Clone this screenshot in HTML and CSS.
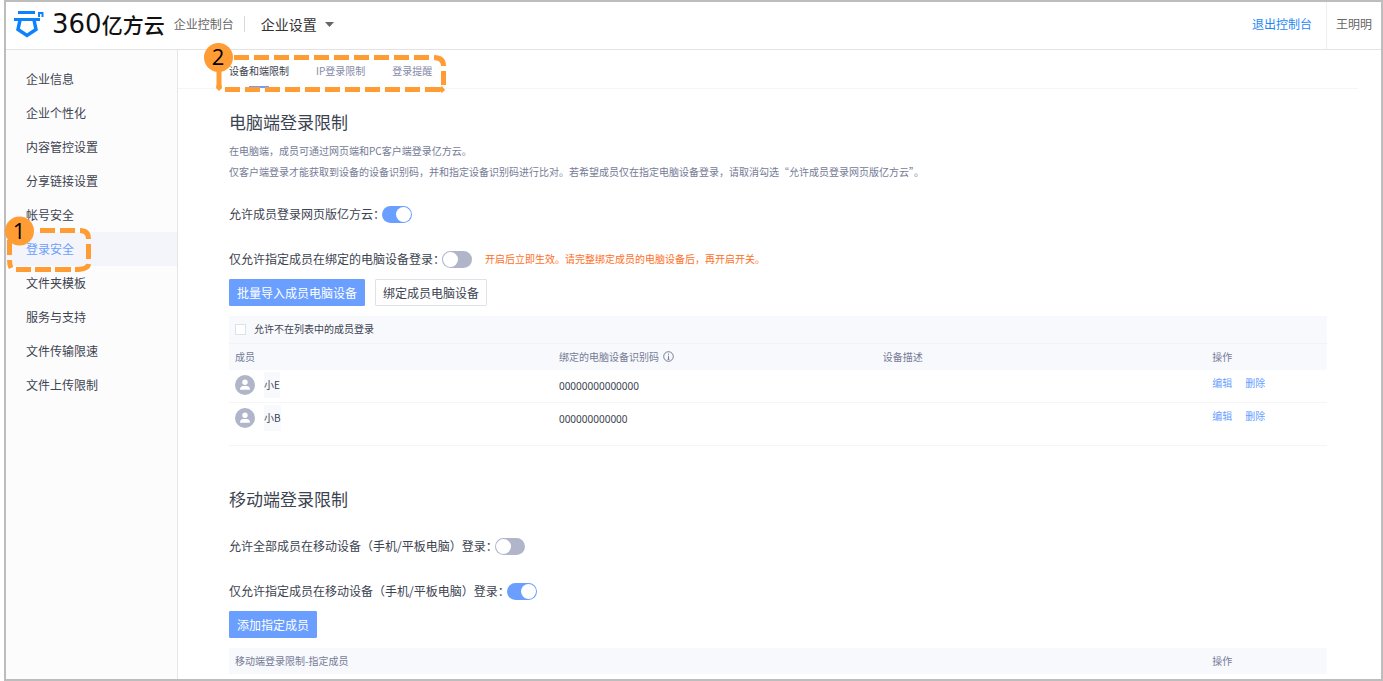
FILE: index.html
```html
<!DOCTYPE html>
<html lang="zh-CN">
<head>
<meta charset="utf-8">
<title>企业控制台</title>
<link rel="stylesheet" href="styles.css">
</head>
<body>
<div class="frame">
  <header class="header">
    <svg class="logo" width="32" height="28" viewBox="0 0 32 28" fill="none" stroke="#0c83fb" aria-hidden="true">
      <path d="M4 2.500H21" stroke-width="3"/>
      <path d="M0 9.500H26" stroke-width="3"/>
      <path d="M25 7V3H28.500V7" stroke-width="2"/>
      <path d="M6 10L4 19.500L13 25.500L22 19.500L20 10" stroke-width="3.500"/>
    </svg>
    <span class="brand"><span class="brand-num">360</span>亿方云</span>
    <span class="console">企业控制台</span>
    <button class="switcher" type="button">企业设置
      <svg width="9" height="5" viewBox="0 0 9 5" aria-hidden="true"><path d="M0 0H9L4.500 5Z" fill="#666"/></svg>
    </button>
    <a class="exit" href="#">退出控制台</a>
    <span class="user">王明明</span>
  </header>

  <div class="body">
    <nav class="sidebar">
      <a href="#">企业信息</a>
      <a href="#">企业个性化</a>
      <a href="#">内容管控设置</a>
      <a href="#">分享链接设置</a>
      <a href="#">帐号安全</a>
      <a class="current" href="#">登录安全
        <svg class="mark mark-side" width="90" height="60" viewBox="4 214 90 60" fill="none" stroke="#ff9c33" stroke-width="5">
          <path d="M40 230.500H55M60 230.500H75M80 230.500Q88.500 230.500 88.500 239M88.500 244V259M88.500 264Q88 269.500 75 269.500M71 269.500H55M51 269.500H35M31 269.500H16M11 268Q9.500 265 9.500 260M9.500 255V240"/>
          <circle cx="19.500" cy="231" r="14.500" fill="#ff9c33" stroke="none"/>
          <text class="mark-num" x="19" y="239">1</text>
        </svg>
      </a>
      <a href="#">文件夹模板</a>
      <a href="#">服务与支持</a>
      <a href="#">文件传输限速</a>
      <a href="#">文件上传限制</a>
    </nav>

    <main class="main">
      <nav class="tabs">
        <a class="on" href="#">设备和端限制</a>
        <a href="#">IP登录限制</a>
        <a href="#">登录提醒</a>
        <svg class="mark mark-tabs" width="243" height="60" viewBox="204 33 243 60" fill="none" stroke="#ff9c33" stroke-width="5">
          <path d="M234 57.500H430" stroke-dasharray="15 5"/>
          <path d="M434 57.500Q443.500 57.500 443.500 66M443.500 71V85M443.500 88L440 91"/>
          <path d="M225 89.500H440" stroke-dasharray="15 5"/>
          <path d="M219 70V86"/>
          <path d="M216.500 85H221.500L222 88L219 91L216 88Z" fill="#ff9c33" stroke="none"/>
          <circle cx="218.500" cy="57.500" r="14.500" fill="#ff9c33" stroke="none"/>
          <text class="mark-num" x="218" y="65">2</text>
        </svg>
      </nav>

      <div class="content">
        <section class="section">
          <h2>电脑端登录限制</h2>
          <p>在电脑端，成员可通过网页端和PC客户端登录亿方云。</p>
          <p>仅客户端登录才能获取到设备的设备识别码，并和指定设备识别码进行比对。若希望成员仅在指定电脑设备登录，请取消勾选“允许成员登录网页版亿方云”。</p>
          <div class="option">
            <label for="web">允许成员登录网页版亿方云：</label>
            <input class="toggle" id="web" type="checkbox" checked>
          </div>
          <div class="option">
            <label for="bound">仅允许指定成员在绑定的电脑设备登录：</label>
            <input class="toggle" id="bound" type="checkbox">
            <span class="warn">开启后立即生效。请完整绑定成员的电脑设备后，再开启开关。</span>
          </div>
          <div class="actions">
            <button class="btn primary" type="button">批量导入成员电脑设备</button>
            <button class="btn" type="button">绑定成员电脑设备</button>
          </div>
          <table class="table">
            <colgroup><col class="c-member"><col class="c-code"><col class="c-desc"><col class="c-ops"></colgroup>
            <thead>
              <tr class="allow"><td colspan="4"><label class="check"><input type="checkbox">允许不在列表中的成员登录</label></td></tr>
              <tr>
                <th>成员</th>
                <th><span class="with-icon">绑定的电脑设备识别码
                  <svg width="11" height="11" viewBox="0 0 11 11" fill="none" stroke="#757b96" aria-hidden="true"><circle cx="5.500" cy="5.500" r="4.800"/><path d="M5.500 4.800V8.300M5.500 2.600V3.800M4.500 8.300H6.500"/></svg></span></th>
                <th>设备描述</th>
                <th>操作</th>
              </tr>
            </thead>
            <tbody>
              <tr>
                <td><span class="member">
                  <svg width="20" height="20" viewBox="0 0 20 20" aria-hidden="true"><circle cx="10" cy="10" r="10" fill="#b1b5ca"/><circle cx="10" cy="7.300" r="2.700" fill="#fff"/><path d="M5 14.800V13.500Q5.500 11 8 11H12Q14.500 11 15 13.500V14.800Z" fill="#fff"/></svg>
                  <span class="name">小E</span></span></td>
                <td class="code">00000000000000</td>
                <td></td>
                <td class="ops"><a href="#">编辑</a><a href="#">删除</a></td>
              </tr>
              <tr class="last">
                <td><span class="member">
                  <svg width="20" height="20" viewBox="0 0 20 20" aria-hidden="true"><circle cx="10" cy="10" r="10" fill="#b1b5ca"/><circle cx="10" cy="7.300" r="2.700" fill="#fff"/><path d="M5 14.800V13.500Q5.500 11 8 11H12Q14.500 11 15 13.500V14.800Z" fill="#fff"/></svg>
                  <span class="name">小B</span></span></td>
                <td class="code">000000000000</td>
                <td></td>
                <td class="ops"><a href="#">编辑</a><a href="#">删除</a></td>
              </tr>
            </tbody>
          </table>
        </section>

        <section class="section">
          <h2>移动端登录限制</h2>
          <div class="option">
            <label for="all-mobile">允许全部成员在移动设备（手机/平板电脑）登录：</label>
            <input class="toggle" id="all-mobile" type="checkbox">
          </div>
          <div class="option">
            <label for="some-mobile">仅允许指定成员在移动设备（手机/平板电脑）登录：</label>
            <input class="toggle" id="some-mobile" type="checkbox" checked>
          </div>
          <div class="actions">
            <button class="btn primary" type="button">添加指定成员</button>
          </div>
          <table class="table">
            <colgroup><col class="c-wide"><col class="c-ops"></colgroup>
            <thead><tr><th>移动端登录限制-指定成员</th><th>操作</th></tr></thead>
          </table>
        </section>
      </div>
    </main>
  </div>
</div>
</body>
</html>
```
FILE: styles.css
```css
* {
  box-sizing: border-box;
}

body {
  margin: 0;
  background: #fff;
  color: #3c4350;
  font-family: "Noto Sans CJK SC", sans-serif;
  font-size: 12px;
  line-height: 20px;
}

a {
  color: inherit;
  text-decoration: none;
}

button,
input {
  margin: 0;
  font: inherit;
  color: inherit;
}

.frame {
  display: flex;
  flex-direction: column;
  min-height: 100vh;
  margin-left: 4px;
  border: 2px solid #bdbdbd;
}

.header {
  display: flex;
  align-items: center;
  height: 48px;
  padding-left: 8px;
  border-bottom: 1px solid #e3e3e3;
}

.logo,
.brand,
.console,
.switcher,
.exit {
  margin-bottom: 3px;
}

.logo {
  margin-right: 6px;
}

.brand {
  display: flex;
  align-items: center;
  color: #111;
  font-size: 21px;
  font-weight: 500;
}

.brand-num {
  font-family: "DejaVu Sans", sans-serif;
  font-size: 26px;
  font-weight: 400;
}

.console {
  margin-left: 9px;
  padding-right: 10px;
  border-right: 1px solid #d8d8d8;
  color: #666;
  line-height: 16px;
}

.switcher {
  display: flex;
  align-items: center;
  gap: 8px;
  padding: 0 16px;
  border: 0;
  background: none;
  color: #333;
  font-size: 14px;
}

.exit {
  margin-left: auto;
  padding-right: 14px;
  color: #1f87f5;
}

.user {
  align-self: stretch;
  padding: 0 9px;
  border-left: 1px solid #eee;
  color: #666;
  line-height: 44px;
}

.body {
  display: flex;
  flex: 1;
}

.sidebar {
  flex: none;
  width: 172px;
  padding-top: 12px;
  border-right: 1px solid #e6e6e6;
  background: #fcfcfc;
}

.sidebar a {
  display: block;
  position: relative;
  padding-left: 20px;
  line-height: 34px;
}

.sidebar .current {
  background: #f4f5fa;
  color: #6a9fff;
}

.mark {
  position: absolute;
  pointer-events: none;
}

.mark-side {
  top: -18px;
  left: -2px;
}

.mark-tabs {
  top: -17px;
  left: 26px;
}

.mark-num {
  fill: #000;
  stroke: none;
  font-family: "Open Sans", sans-serif;
  font-size: 22px;
  text-anchor: middle;
}

.main {
  flex: 1;
  min-width: 0;
  padding-right: 23px;
}

.tabs {
  display: flex;
  position: relative;
  gap: 27px;
  padding-top: 4px;
  padding-left: 51px;
  border-bottom: 1px solid #f5f5f5;
  color: #858ba8;
  font-size: 10px;
  line-height: 34px;
}

.tabs a {
  position: relative;
}

.tabs .on {
  color: #3c4350;
}

.tabs .on::after {
  position: absolute;
  bottom: 0;
  left: 20px;
  width: 20px;
  height: 2px;
  background: #6a9fff;
  content: "";
}

.content {
  padding: 21px 31px 0 51px;
}

.section {
  margin-bottom: 41px;
}

.section:last-child {
  margin-bottom: 0;
}

h2 {
  margin: 0 0 6px;
  font-size: 17px;
  font-weight: 400;
  line-height: 24px;
}

p {
  margin: 0;
  color: #757b96;
  font-size: 10px;
  line-height: 21px;
}

.option {
  display: flex;
  align-items: center;
  height: 20px;
  margin-top: 25px;
}

p + .option {
  margin-top: 22px;
}

.toggle {
  flex: none;
  width: 30px;
  height: 17px;
  margin-left: -3px;
  padding: 1px;
  border-radius: 9px;
  background: #b1b5ca;
  appearance: none;
}

.toggle::before {
  display: block;
  width: 15px;
  height: 15px;
  border-radius: 50%;
  background: #fff;
  content: "";
}

.toggle:checked {
  background: #6a9fff;
}

.toggle:checked::before {
  margin-left: auto;
}

.warn {
  margin-left: 13px;
  color: #ff6f1f;
  font-size: 10px;
}

.actions {
  display: flex;
  gap: 10px;
  margin: 10px 0;
}

.btn {
  height: 27px;
  padding: 0 7px;
  border: 1px solid #e0e2e8;
  border-radius: 1px;
  background: #fff;
}

.btn.primary {
  border-color: #6a9fff;
  background: #6a9fff;
  color: #fff;
}

.table {
  width: 100%;
  border-collapse: collapse;
  table-layout: fixed;
  font-size: 10px;
}

.c-member,
.c-code {
  width: 29.5%;
}

.c-desc {
  width: 30%;
}

.c-ops {
  width: 11%;
}

.table th,
.table td {
  padding: 0 0 0 6px;
  text-align: left;
  vertical-align: top;
}

.table thead {
  background: #f8f9fd;
}

.table th {
  height: 26px;
  color: #757b96;
  font-weight: 400;
  line-height: 26px;
}

.table .allow td {
  height: 27px;
  border-bottom: 1px solid #f2f3f5;
}

.with-icon {
  display: flex;
  align-items: center;
  gap: 4px;
}

.check {
  display: flex;
  align-items: center;
  gap: 8px;
  line-height: 26px;
}

.check input {
  width: 11px;
  height: 11px;
  border: 1px solid #dfe1e8;
  background: #fff;
  appearance: none;
}

.table tbody td {
  height: 33px;
  border-bottom: 1px solid #f5f5f7;
}

.table tbody .last td {
  height: 43px;
}

.member {
  display: flex;
  align-items: center;
  gap: 9px;
  padding-top: 2px;
}

.name {
  background: #f8f9fd;
  line-height: 26px;
}

.table .code {
  font-family: "Noto Sans", sans-serif;
  line-height: 32px;
}

.ops a {
  margin-right: 13px;
  color: #6a9fff;
  line-height: 26px;
}
```
